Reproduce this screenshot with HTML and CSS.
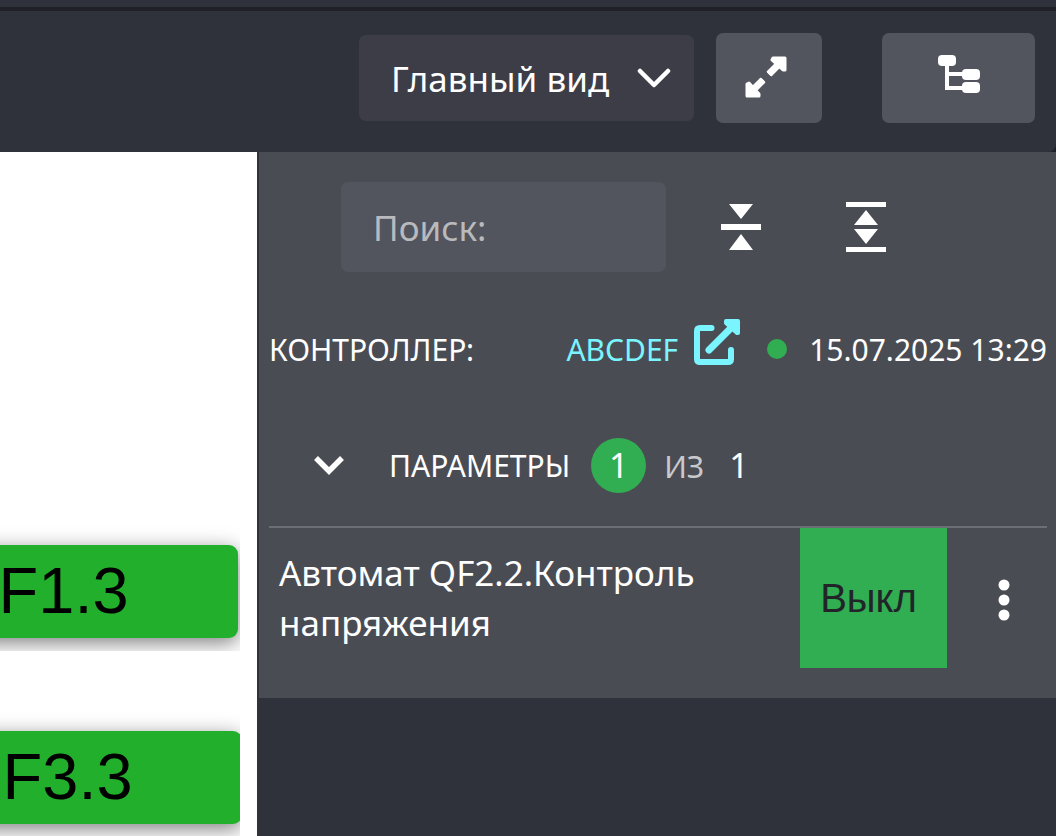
FILE: index.html
```html
<!DOCTYPE html>
<html lang="ru">
<head>
  <meta charset="UTF-8">
  <meta name="viewport" content="width=device-width, initial-scale=1.0">
  <title>Главный вид</title>
  <link rel="stylesheet" href="styles.css">
</head>
<body>
  <div class="top-strip"></div>

  <header class="toolbar">
    <div class="view-select">
      <select aria-label="Вид">
        <option>Главный вид</option>
      </select>
      <svg class="select-arrow" width="34" height="20" viewBox="0 0 34 20" aria-hidden="true">
        <path d="M3 3l14 14L31 3" fill="none" stroke="#fff" stroke-width="4.5" stroke-linecap="round" stroke-linejoin="round"/>
      </svg>
    </div>
    <button type="button" class="tool-btn btn-full" aria-label="Во весь экран">
      <svg width="42" height="42" viewBox="0 0 42 42" fill="#fff" stroke="#fff" aria-hidden="true">
        <path d="M24 18L35 7M18 24L7 35" stroke-width="7"/>
        <path d="M23.5 16l2.500 2.500M16 23.500l2.500 2.500" stroke-width="3" stroke-linecap="round"/>
        <path d="M28 2H40V14H38L27 4zM2 28V40H14V38L4 27z" stroke-width="3" stroke-linejoin="round"/>
      </svg>
    </button>
    <button type="button" class="tool-btn btn-tree" aria-label="Дерево">
      <svg width="42" height="40" viewBox="0 0 42 40" fill="#fff" aria-hidden="true">
        <rect x="0" y="1" width="18" height="11" rx="4"/>
        <rect x="24" y="15" width="18" height="11" rx="4"/>
        <rect x="24" y="28" width="18" height="11" rx="4"/>
        <path d="M9 10V34H26M9 20H26" fill="none" stroke="#fff" stroke-width="4"/>
      </svg>
    </button>
  </header>

  <main class="workspace">
    <section class="canvas">
      <div class="tile tile-1"><div class="node">QF1.3</div></div>
      <div class="tile tile-2"><div class="node">QF3.3</div></div>
    </section>

    <aside class="side">
      <div class="panel">
        <div class="search-row">
          <input type="text" class="search" placeholder="Поиск:" aria-label="Поиск">
          <button type="button" class="icon-btn" aria-label="Свернуть всё">
            <svg width="40" height="50" viewBox="0 0 40 50" fill="#fff" aria-hidden="true">
              <path d="M8 2H32L20 17zM0 22H40V28H0zM20 32L32 48H8z"/>
            </svg>
          </button>
          <button type="button" class="icon-btn" aria-label="Развернуть всё">
            <svg width="40" height="50" viewBox="0 0 40 50" fill="#fff" aria-hidden="true">
              <path d="M0 0H40V5H0zM20 8L32 23H8zM8 27H32L20 42zM0 45H40V50H0z"/>
            </svg>
          </button>
        </div>

        <div class="controller-row">
          <span class="controller-label">КОНТРОЛЛЕР:</span>
          <a href="#" class="controller-link">
            ABCDEF
            <svg width="46" height="46" viewBox="0 0 46 46" aria-hidden="true">
              <path d="M17.500 9H6Q3 9 3 12V40Q3 43 6 43H34Q37 43 37 40V31" fill="none" stroke="#7af5ff" stroke-width="6" stroke-linecap="round"/>
              <path d="M15 31L39 7" stroke="#7af5ff" stroke-width="7" stroke-linecap="round"/>
              <path d="M32 2H44V14H43L32 4z" fill="#7af5ff" stroke="#7af5ff" stroke-width="4" stroke-linejoin="round"/>
            </svg>
          </a>
          <span class="status-dot"></span>
          <time datetime="2025-07-15T13:29">15.07.2025 13:29</time>
        </div>

        <div class="params-row">
          <button type="button" class="icon-btn toggle" aria-label="Свернуть параметры">
            <svg width="32" height="20" viewBox="0 0 32 20" aria-hidden="true">
              <path d="M3 3L16 16L29 3" fill="none" stroke="#fff" stroke-width="5.500"/>
            </svg>
          </button>
          <span class="params-title">ПАРАМЕТРЫ</span>
          <span class="badge">1</span>
          <span class="of">ИЗ</span>
          <span class="total">1</span>
        </div>

        <div class="param">
          <div class="param-name">Автомат QF2.2.Контроль напряжения</div>
          <button type="button" class="param-value">Выкл</button>
          <button type="button" class="icon-btn param-menu" aria-label="Меню">
            <svg width="12" height="42" viewBox="0 0 12 42" fill="#fff" aria-hidden="true">
              <circle cx="6" cy="6" r="5.500"/>
              <circle cx="6" cy="21" r="5.500"/>
              <circle cx="6" cy="36" r="5.500"/>
            </svg>
          </button>
        </div>
      </div>
    </aside>
  </main>
</body>
</html>
```
FILE: styles.css
```css
:root {
  --dark: #30323b;
  --darker: #202127;
  --panel: #4a4c54;
  --control: #52555d;
  --green: #31ad52;
  --cyan: #7af5ff;
}

* {
  box-sizing: border-box;
}

body {
  margin: 0;
  min-height: 100vh;
  display: flex;
  flex-direction: column;
  background: var(--darker);
  color: #fff;
  font-family: "Noto Sans", "Open Sans", sans-serif;
  font-size: 30px;
}

button,
input,
select {
  font-family: inherit;
  color: inherit;
  border: none;
}

button {
  padding: 0;
  cursor: pointer;
}

svg {
  display: block;
}

.top-strip {
  height: 7px;
  background: var(--dark);
}

/* toolbar */
.toolbar {
  display: flex;
  justify-content: flex-end;
  align-items: center;
  margin-top: 4px;
  padding: 22px 21px 29px;
  background: var(--dark);
  border-bottom-right-radius: 8px;
}

.view-select {
  display: grid;
  grid-template-columns: 100%;
  align-items: center;
  width: 335px;
  margin-right: 22px;
}

.view-select select,
.select-arrow {
  grid-area: 1 / 1;
}

.view-select select {
  appearance: none;
  width: 100%;
  height: 86px;
  padding: 0 70px 0 32px;
  border-radius: 7px;
  background: #3d3d47;
  font-size: 35px;
}

.select-arrow {
  justify-self: end;
  margin-right: 23px;
  pointer-events: none;
}

.tool-btn {
  display: flex;
  justify-content: center;
  align-items: center;
  height: 90px;
  border-radius: 7px;
  background: var(--control);
}

.btn-full {
  width: 106px;
  padding: 0 6px 2px 0;
  margin-right: 60px;
}

.btn-tree {
  width: 153px;
  padding-bottom: 8px;
}

/* workspace */
.workspace {
  flex: 1;
  display: grid;
  grid-template-columns: 257fr 799fr;
}

.canvas {
  position: relative;
  overflow: hidden;
  background: #fff;
}

.tile {
  position: absolute;
  left: -80px;
  width: 320px;
  height: 136px;
  padding-top: 30px;
  overflow: hidden;
}

.tile-1 {
  top: 363px;
}

.tile-2 {
  top: 549px;
}

.node {
  width: 318px;
  height: 93px;
  padding-left: 28px;
  border-radius: 9px;
  background: #22b02c;
  box-shadow: 0 5px 20px rgba(0, 0, 0, 0.5);
  color: #000;
  font: 65px/92px "Liberation Sans", Arial, sans-serif;
}

.tile-2 .node {
  width: 322px;
  padding-left: 32px;
}

.side {
  border-left: 2px solid var(--dark);
  background: var(--dark);
}

.panel {
  padding: 30px 9px 30px 10px;
  background: var(--panel);
}

.icon-btn {
  display: flex;
  justify-content: center;
  align-items: center;
  background: none;
}

.search-row {
  display: flex;
  justify-content: flex-end;
  align-items: center;
  padding-right: 161px;
}

.search {
  width: 325px;
  height: 90px;
  margin-right: 55px;
  padding: 0 32px;
  border-radius: 7px;
  background: var(--control);
  font-size: 35px;
}

.search::placeholder {
  color: #b9babd;
}

.search-row .icon-btn + .icon-btn {
  margin-left: 85px;
}

.controller-row {
  display: flex;
  align-items: center;
  height: 60px;
  margin-top: 47px;
}

.controller-label {
  flex: 1;
}

.controller-link {
  display: flex;
  align-items: center;
  gap: 16px;
  color: var(--cyan);
  text-decoration: none;
}

.controller-link svg {
  margin-bottom: 14px;
}

.status-dot {
  width: 20px;
  height: 20px;
  margin: 0 22px 0 27px;
  border-radius: 50%;
  background: var(--green);
}

.params-row {
  display: flex;
  align-items: center;
  height: 122px;
  margin-top: 25px;
  padding-left: 44px;
}

.params-title {
  margin: 0 21px 0 44px;
}

.badge {
  width: 55px;
  height: 55px;
  border-radius: 50%;
  background: var(--green);
  font-size: 34px;
  line-height: 55px;
  text-align: center;
}

.of {
  margin: 0 25px 0 18px;
  padding-top: 2px;
  color: #c8c9cb;
}

.total {
  font-size: 34px;
}

/* parameter row */
.param {
  display: flex;
  min-height: 142px;
  border-top: 2px solid #6c6e75;
}

.param-name {
  flex: 1;
  padding: 20px 10px;
  font-size: 35px;
  line-height: 50px;
}

.param-value {
  width: 147px;
  padding-right: 10px;
  background: var(--green);
  color: #212529;
  font-family: "Liberation Sans", Arial, sans-serif;
  font-size: 40px;
}

.param-menu {
  width: 100px;
  padding: 4px 0 0 14px;
}
```
